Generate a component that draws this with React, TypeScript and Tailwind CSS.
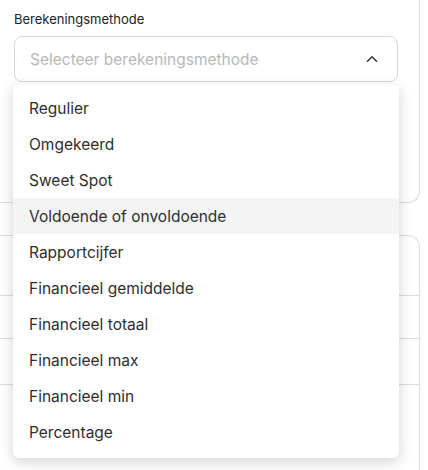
import React from "react";
import { ChevronUp } from "lucide-react";

const items = [
  "Regulier",
  "Omgekeerd",
  "Sweet Spot",
  "Voldoende of onvoldoende",
  "Rapportcijfer",
  "Financieel gemiddelde",
  "Financieel totaal",
  "Financieel max",
  "Financieel min",
  "Percentage",
];

export default function App() {
  return (
    <div
      className="relative w-[428px] h-[470px] overflow-hidden bg-white text-[#222]"
      style={{ fontFamily: "Inter, 'Noto Sans', sans-serif" }}
    >
      <div className="flex flex-col w-[420px]">
        {/* card 1 */}
        <div className="h-[203px] border-r border-b border-[#d8dce3] rounded-br-xl pl-[14px] pt-[10px]">
          <div className="text-[13px] leading-[18px] text-[#222]">Berekeningsmethode</div>
          <div className="relative mt-[8px] w-[384px]">
            <div className="flex items-center justify-between h-[46px] border border-[#d3d7df] rounded-lg pl-[15px] pr-[16px]">
              <span className="text-[15.5px] leading-[20px] pt-[2px] text-[#b8b8b8]">Selecteer berekeningsmethode</span>
              <ChevronUp size={18} strokeWidth={2} className="text-[#333]" />
            </div>
            <div className="absolute left-[-1px] top-[48px] w-[386px] z-10 bg-white rounded-md shadow-[0_4px_14px_rgba(0,0,0,0.18)] pt-[6px] pb-[8px]">
              {items.map((it, i) => (
                <div
                  key={it}
                  className={
                    "h-[36px] flex items-center pl-[16px] pt-[2px] text-[15.5px] text-[#2e2e2e] " +
                    (i === 3 ? "bg-[#f4f4f4]" : "")
                  }
                >
                  {it}
                </div>
              ))}
            </div>
          </div>
        </div>
        {/* card 2 */}
        <div className="mt-[32px] border-t border-r border-[#d8dce3] rounded-tr-xl h-[240px] flex flex-col">
          <div className="h-[60px] border-b border-[#d8dce3]" />
          <div className="h-[43px] border-b border-[#d8dce3]" />
          <div className="h-[46px] border-b border-[#d8dce3]" />
        </div>
      </div>
    </div>
  );
}
